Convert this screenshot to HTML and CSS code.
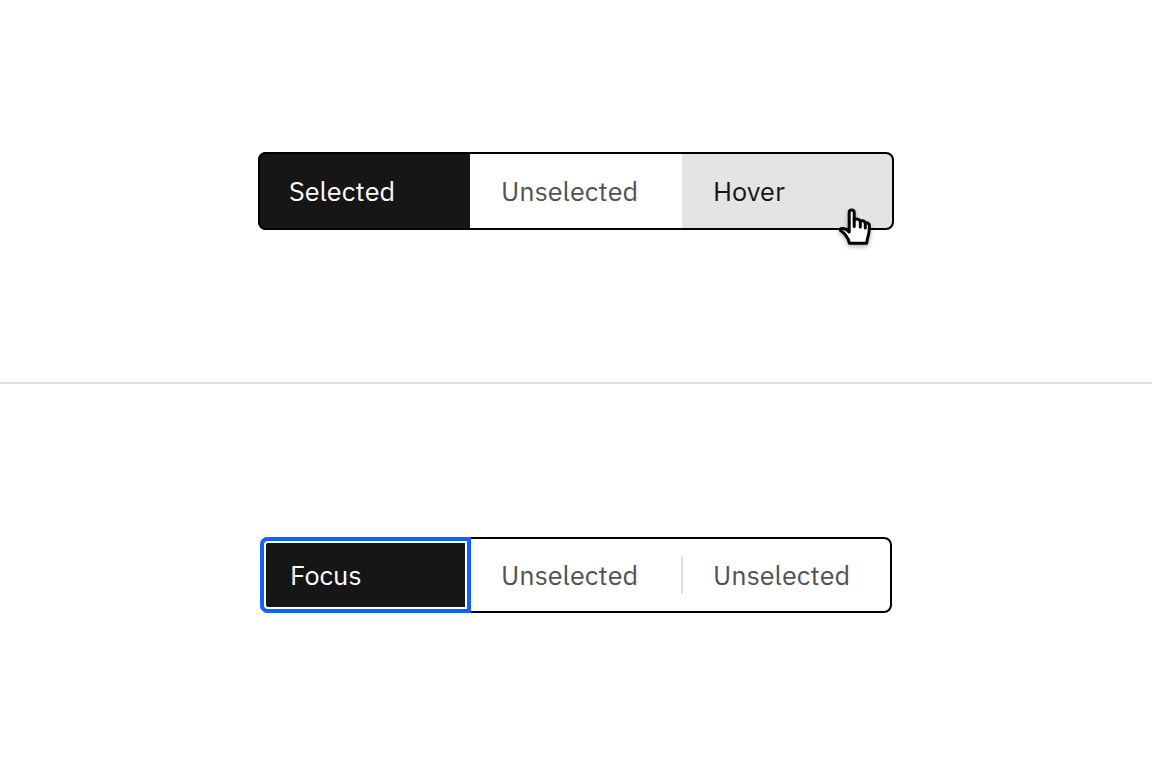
FILE: index.html
```html
<!DOCTYPE html>
<html lang="en">
<head>
    <meta charset="UTF-8">
    <meta name="viewport" content="width=device-width, initial-scale=1.0">
    <title>Content switcher states</title>
    <link rel="stylesheet" href="styles.css">
</head>
<body>
    <main class="page">
        <section class="panel">
            <div class="switcher" role="tablist" aria-label="Selected, unselected and hover">
                <button class="switch switch-selected" type="button" role="tab" aria-selected="true">Selected</button>
                <button class="switch" type="button" role="tab" aria-selected="false">Unselected</button>
                <button class="switch switch-hover" type="button" role="tab" aria-selected="false">Hover</button>
                <svg class="cursor" width="40" height="46" viewBox="0 0 40 46" aria-hidden="true">
                    <path d="M14.2 28V8.500a2.500 2.500 0 0 1 5 0V15.500c2-.8 5-.6 6 1.600 2-.5 4.200-.2 5 1.700 2.200-.5 4.200.7 4.200 3.200 0 5-.4 7.800-1.400 10.800-.6 1.900-1 3.600-1.300 6.400H14.400c-.5-3-1.300-4.700-2.800-6.600-1.800-2.300-1.900-3.600-5.200-5.400-2-1.200-1.300-2.700.8-2.800 3-.1 5.200 1.400 7 3.600z"/>
                    <path d="M19.200 15v7.500M25.300 17.300v5.700M30.300 19v5"/>
                </svg>
            </div>
        </section>

        <section class="panel">
            <div class="switcher switcher-focused" role="tablist" aria-label="Focus and unselected">
                <button class="switch switch-focus" type="button" role="tab" aria-selected="true">Focus</button>
                <button class="switch" type="button" role="tab" aria-selected="false">Unselected</button>
                <button class="switch switch-divided" type="button" role="tab" aria-selected="false">Unselected</button>
            </div>
        </section>
    </main>
</body>
</html>
```
FILE: styles.css
```css
* {
    box-sizing: border-box;
}

body {
    margin: 0;
    background-color: #ffffff;
    font-family: 'IBM Plex Sans', Roboto, sans-serif;
}

.page {
    display: grid;
    grid-template-rows: 1fr 1fr;
    min-height: 100vh;
}

.panel {
    display: flex;
    align-items: center;
    justify-content: center;
}

.panel:first-child {
    border-bottom: 2px solid #e0e0e0;
}

.switcher {
    position: relative;
    display: grid;
    grid-template-columns: 212px 212px 212px;
    height: 78px;
    border-radius: 8px;
    background-color: #ffffff;
}

/* Outline sits over the fills so the corners stay crisp */
.switcher::after {
    content: "";
    position: absolute;
    inset: 0;
    border: 2px solid #000000;
    border-radius: 8px;
    pointer-events: none;
}

.switch {
    padding: 0 31px;
    border: none;
    background-color: transparent;
    color: #525252;
    font-family: inherit;
    font-size: 27px;
    line-height: 36px;
    text-align: left;
    cursor: pointer;
}

.switch:hover,
.switch-hover {
    background-color: #e4e4e4;
    color: #161616;
}

.switch:last-of-type {
    border-radius: 0 8px 8px 0;
}

.switch-selected,
.switch-selected:hover,
.switch-focus,
.switch-focus:hover {
    background-color: #161616;
    color: #ffffff;
    border-radius: 8px 0 0 8px;
}

.switcher-focused {
    grid-template-columns: 211px 212px 209px;
    height: 76px;
}

.switcher-focused .switch {
    padding: 0 30px;
}

/* Focus ring with a white inset between it and the fill */
.switch-focus {
    position: relative;
    z-index: 1;
    box-shadow: inset 0 0 0 4px #0f62fe, inset 0 0 0 6px #ffffff;
}

.switch-divided {
    position: relative;
}

.switch-divided::before {
    content: "";
    position: absolute;
    top: 50%;
    left: -2px;
    width: 2px;
    height: 38px;
    margin-top: -19px;
    background-color: #e0e0e0;
}

.cursor {
    position: absolute;
    right: 19px;
    bottom: -20px;
    z-index: 1;
    fill: #ffffff;
    stroke: #000000;
    stroke-width: 3;
    stroke-linecap: round;
    stroke-linejoin: round;
    filter: drop-shadow(0 2px 2px rgba(0, 0, 0, 0.3));
    pointer-events: none;
}
```
